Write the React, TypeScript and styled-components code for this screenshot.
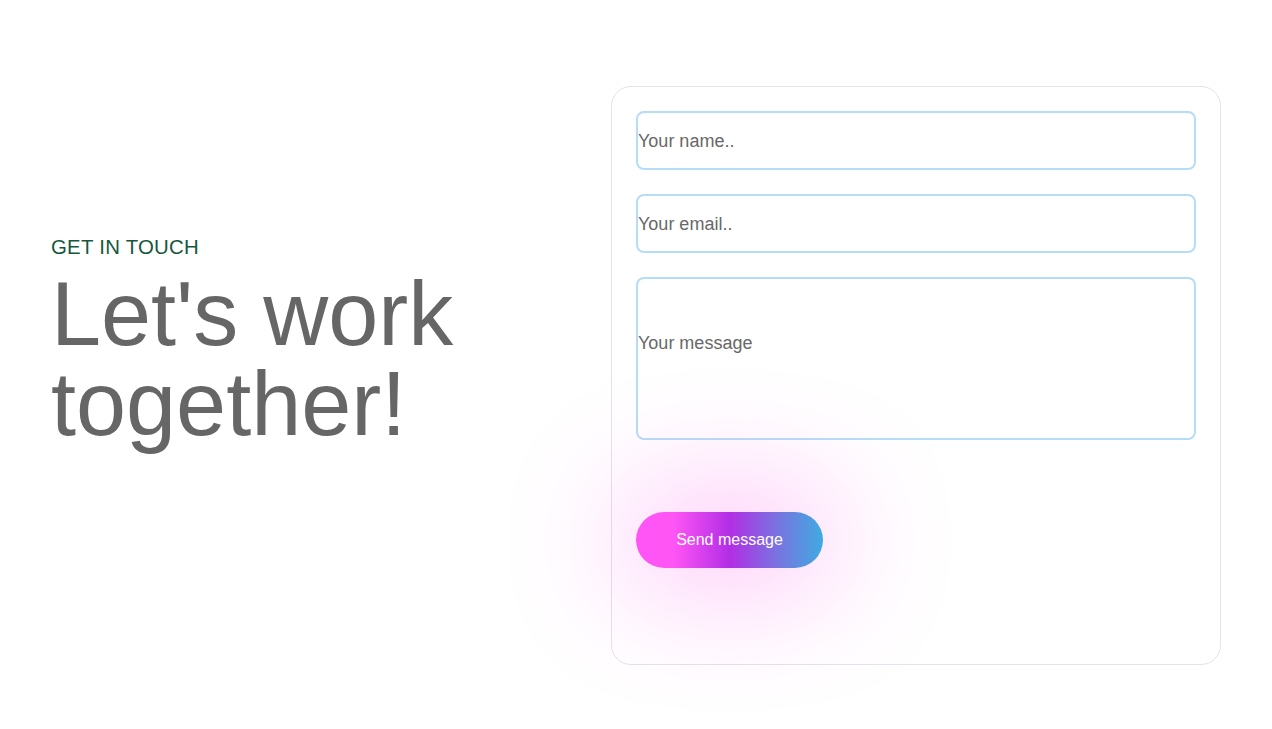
import React from "react";
import styled, { createGlobalStyle, css } from "styled-components";

const GlobalStyle = createGlobalStyle`
  html, body {
    margin: 0;
    padding: 0;
    background: #ffffff;
    font-family: "Liberation Sans", Arial, sans-serif;
  }
  * { box-sizing: border-box; }
`;

const Page = styled.main`
  display: grid;
  grid-template-columns: 1fr 610px;
  align-items: start;
  padding: 86px 51px 64px 51px;
  min-height: 729px;
`;

const Intro = styled.section`
  display: flex;
  flex-direction: column;
  padding-top: 150px;
`;

const Eyebrow = styled.p`
  margin: 0 0 10px;
  font-size: 20.4px;
  line-height: 23px;
  color: #15573d;
  letter-spacing: 0.25px;
`;

const Heading = styled.h1`
  margin: 0;
  font-size: 90px;
  line-height: 90px;
  font-weight: 400;
  color: #666666;
`;

const Card = styled.form`
  display: flex;
  flex-direction: column;
  align-items: flex-start;
  gap: 24px;
  padding: 24px 24px 96px;
  border: 1px solid #e4e3ea;
  border-radius: 20px;
`;

const fieldBase = css`
  width: 100%;
  padding: 0;
  border: 2px solid #b6ddf8;
  border-radius: 8px;
  background: #ffffff;
  font-family: "Liberation Sans", Arial, sans-serif;
  font-size: 18px;
  color: #444;
  outline: none;
  &::placeholder {
    color: #686868;
    opacity: 1;
  }
`;

const Field = styled.input`
  ${fieldBase};
  height: 59px;
  padding-top: 2px;
`;

const MessageField = styled.textarea`
  ${fieldBase};
  height: 163px;
  padding-top: 54px;
  resize: none;
  line-height: normal;
`;

const SendButton = styled.button`
  margin-top: 48px;
  width: 187px;
  height: 56px;
  border: none;
  border-radius: 28px;
  background: linear-gradient(90deg, #ff55f6 0%, #ff55f5 20%, #b22ee5 50%, #7a72e0 75%, #3fabe2 100%);
  box-shadow: 0 0 120px 12px rgba(255, 80, 235, 0.42);
  color: #ffffff;
  font-family: "Liberation Sans", Arial, sans-serif;
  font-size: 16px;
  cursor: pointer;
`;

export default function App() {
  return (
    <>
      <GlobalStyle />
      <Page>
        <Intro>
          <Eyebrow>GET IN TOUCH</Eyebrow>
          <Heading>
            Let's work
            <br />
            together!
          </Heading>
        </Intro>
        <Card onSubmit={(e) => e.preventDefault()}>
          <Field type="text" placeholder="Your name.." />
          <Field type="email" placeholder="Your email.." />
          <MessageField placeholder="Your message" />
          <SendButton type="submit">Send message</SendButton>
        </Card>
      </Page>
    </>
  );
}
